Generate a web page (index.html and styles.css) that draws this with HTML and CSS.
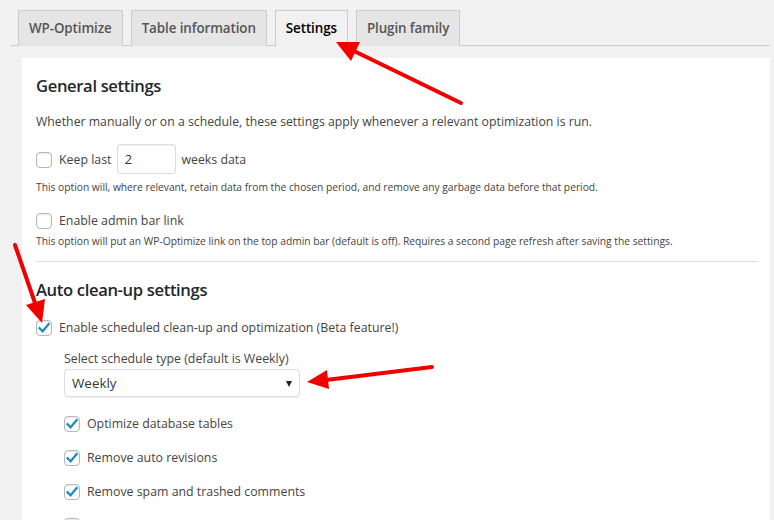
FILE: index.html
```html
<!DOCTYPE html>
<html>
<head>
<meta charset="utf-8">
<link rel="stylesheet" href="styles.css">
</head>
<body>
<div class="wrap">
  <nav class="tabs">
    <span class="tab">WP-Optimize</span>
    <span class="tab">Table information</span>
    <span class="tab active">Settings</span>
    <span class="tab">Plugin family</span>
  </nav>
  <div class="panel">
    <h2 class="title">General settings</h2>
    <p class="intro">Whether manually or on a schedule, these settings apply whenever a relevant optimization is run.</p>
    <div class="row row-keep">
      <span class="cb"></span>
      <span class="lbl">Keep last</span>
      <span class="num">2</span>
      <span class="lbl">weeks data</span>
    </div>
    <p class="desc desc-1">This option will, where relevant, retain data from the chosen period, and remove any garbage data before that period.</p>
    <div class="row row-admin">
      <span class="cb"></span>
      <span class="lbl">Enable admin bar link</span>
    </div>
    <p class="desc desc-2">This option will put an WP-Optimize link on the top admin bar (default is off). Requires a second page refresh after saving the settings.</p>
    <div class="sep"></div>
    <h2 class="title title-2">Auto clean-up settings</h2>
    <div class="row row-sched">
      <span class="cb checked"><svg viewBox="0 0 16 16"><path d="M3.6 8.2 L6.6 11.2 L12.6 4.2"/></svg></span>
      <span class="lbl">Enable scheduled clean-up and optimization (Beta feature!)</span>
    </div>
    <div class="sub">
      <div class="sel-label">Select schedule type (default is Weekly)</div>
      <div class="select"><span>Weekly</span><span class="caret"></span></div>
      <div class="opts">
        <div class="row"><span class="cb checked"><svg viewBox="0 0 16 16"><path d="M3.6 8.2 L6.6 11.2 L12.6 4.2"/></svg></span><span class="lbl">Optimize database tables</span></div>
        <div class="row"><span class="cb checked"><svg viewBox="0 0 16 16"><path d="M3.6 8.2 L6.6 11.2 L12.6 4.2"/></svg></span><span class="lbl">Remove auto revisions</span></div>
        <div class="row"><span class="cb checked"><svg viewBox="0 0 16 16"><path d="M3.6 8.2 L6.6 11.2 L12.6 4.2"/></svg></span><span class="lbl">Remove spam and trashed comments</span></div>
        <div class="row"><span class="cb"></span><span class="lbl">Remove unapproved comments</span></div>
      </div>
    </div>
  </div>
</div>
<svg class="arrows" width="774" height="520" viewBox="0 0 774 520">
  <g stroke="#f20000" stroke-width="4" stroke-linecap="round" fill="none">
    <line x1="461" y1="103" x2="354" y2="51"/>
    <line x1="15" y1="245" x2="35" y2="303"/>
    <line x1="432" y1="367" x2="326" y2="380"/>
  </g>
  <g fill="#f20000">
    <polygon points="336,42 360,42 351,61"/>
    <polygon points="42,323 45,299 26,305"/>
    <polygon points="307,382 327,370 329,389"/>
  </g>
</svg>
</body>
</html>
```

FILE: styles.css
```css
html, body {
  margin: 0;
  padding: 0;
  background: #f1f1f1;
  font-family: "Open Sans", "Noto Sans", sans-serif;
  color: #444;
  overflow: hidden;
}

.wrap {
  margin: 0 4px 0 11px;
  padding-top: 10px;
}

.tabs {
  display: flex;
  border-bottom: 1px solid #ccc;
  height: 35px;
}

.tab {
  box-sizing: border-box;
  height: 36px;
  margin-left: 7px;
  padding: 5px 10px 0;
  border: 1px solid #ccc;
  border-bottom: none;
  background: #e5e5e5;
  color: #555;
  font-size: 13.4px;
  font-weight: 600;
  line-height: 24px;
  letter-spacing: -0.1px;
}

.tab + .tab {
  margin-left: 8px;
}

.tab.active {
  background: #f1f1f1;
  color: #000;
}

.panel {
  margin: 12px 0 0 11px;
  background: #fff;
  padding: 16px 12px 0 14px;
  height: 500px;
}

.title {
  margin: 0;
  font-size: 16.6px;
  font-weight: 600;
  line-height: 24px;
  color: #23282d;
  letter-spacing: -0.35px;
}

.intro {
  margin: 14px 0 0;
  font-size: 12.27px;
  line-height: 20px;
}

.row {
  display: flex;
  align-items: center;
  height: 20px;
  font-size: 12.35px;
}

.row-keep {
  margin-top: 12px;
  height: 30px;
}

.row-admin {
  margin-top: 15px;
}

.row-sched {
  margin-top: 15px;
}

.cb {
  box-sizing: border-box;
  flex: none;
  width: 16px;
  height: 16px;
  border: 1px solid #b4b9be;
  border-radius: 4px;
  background: #fff;
  box-shadow: inset 0 1px 2px rgba(0, 0, 0, 0.1);
  margin-right: 7px;
  margin-top: 2px;
  display: flex;
  align-items: center;
  justify-content: center;
}

.cb svg {
  width: 16px;
  height: 16px;
  flex: none;
}

.cb svg path {
  fill: none;
  stroke: #1e8cbe;
  stroke-width: 2.3;
  stroke-linecap: square;
}

.num {
  box-sizing: border-box;
  width: 59px;
  height: 30px;
  margin: 0 5px 0 6px;
  padding: 4px 6px;
  border: 1px solid #ddd;
  border-radius: 3px;
  box-shadow: inset 0 1px 2px rgba(0, 0, 0, 0.07);
  font-size: 13.4px;
  line-height: 20px;
  color: #32373c;
}

.desc {
  margin: 5px 0 0;
  font-size: 10.25px;
  line-height: 16px;
  color: #444;
}

.desc-2 {
  margin-top: 3px;
}

.sep {
  margin-top: 12px;
  height: 1px;
  background: #ddd;
}

.title-2 {
  margin-top: 16px;
}

.sub {
  margin-left: 28px;
}

.sel-label {
  margin-top: 12px;
  font-size: 12.35px;
  line-height: 20px;
}

.select {
  box-sizing: border-box;
  width: 236px;
  height: 28px;
  border: 1px solid #ddd;
  border-radius: 4px;
  box-shadow: 0 1px 2px rgba(0, 0, 0, 0.07);
  display: flex;
  align-items: center;
  justify-content: space-between;
  padding: 0 7px 0 7px;
  font-size: 13.4px;
  color: #32373c;
}

.caret {
  width: 0;
  height: 0;
  border-left: 3.5px solid transparent;
  border-right: 3.5px solid transparent;
  border-top: 6px solid #222;
  margin-top: 1px;
}

.opts {
  margin-top: 16px;
  display: flex;
  flex-direction: column;
  gap: 14px;
}

.arrows {
  position: absolute;
  left: 0;
  top: 0;
  pointer-events: none;
}
```
